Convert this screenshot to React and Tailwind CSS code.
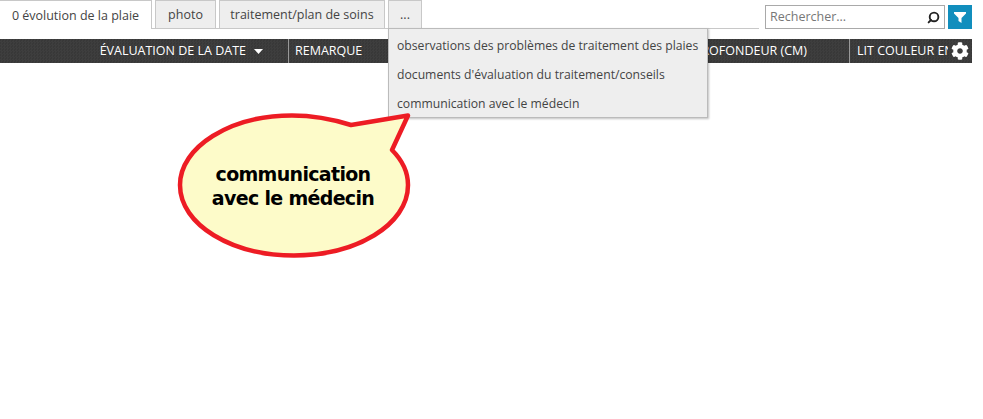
import React from 'react';
import { Search } from 'lucide-react';
import { FaCog } from 'react-icons/fa';

const tabClass = "h-[28px] pt-[2px] flex items-center justify-center bg-[#eeeeee] border border-b-0 border-[#c8c8c8] text-[#444]";

const App = () => {
  return (
    <div className="relative w-[983px] h-[419px] bg-white overflow-hidden font-['Open_Sans',sans-serif] text-[12.5px]">
      {/* top row */}
      <div className="flex h-[39px] w-[972px]">
        <div className="flex flex-1 h-[29px] items-end gap-[3px] border-b border-[#c8c8c8] mr-[6px]">
          <div className="h-[29px] w-[152px] -mb-px pt-[2px] flex items-center justify-center bg-white border-r border-t border-[#c8c8c8] text-[#444]">0 évolution de la plaie</div>
          <div className={tabClass + " w-[61px]"}>photo</div>
          <div className={tabClass + " w-[166px]"}>traitement/plan de soins</div>
          <div className={tabClass + " w-[34px]"}>...</div>
        </div>
        <div className="flex gap-[3px] pt-[5px] h-[29px] box-content">
          <div className="w-[180px] h-[24px] flex items-center justify-between border border-[#a9a9a9] pl-[4px] pr-[4px]">
            <span className="text-[#777]">Rechercher...</span>
            <Search size={13} strokeWidth={3.5} className="text-[#222] -scale-x-100" />
          </div>
          <div className="w-[24px] h-[24px] bg-[#118ebd] flex items-center justify-center">
            <svg width="12" height="11" viewBox="0 0 12 11"><path d="M0 0h12v1.5L7.5 6v5L4.5 9V6L0 1.5z" fill="#fff" /></svg>
          </div>
        </div>
      </div>

      {/* table header */}
      <div className="relative flex h-[24px] w-[972px] items-center bg-[repeating-conic-gradient(#3e3e3e_0_25%,#383838_0_50%)] bg-[length:3px_3px] text-white">
        <div className="w-[289px] h-full flex items-center justify-end gap-[8px] pr-[25px] border-r border-[#999]">
          <span>ÉVALUATION DE LA DATE</span>
          <svg width="9" height="5" viewBox="0 0 9 5"><path d="M0 0h9L4.5 5z" fill="#fff" /></svg>
        </div>
        <div className="w-[270px] h-full flex items-center pl-[6px]">REMARQUE</div>
        <div className="w-[291px] h-full flex items-center justify-end pr-[42px] border-r border-[#999]">PROFONDEUR (CM)</div>
        <div className="flex-1 h-full flex items-center pl-[7px] overflow-hidden whitespace-nowrap pr-[24px]">
          <span className="block overflow-hidden">LIT COULEUR EN PLAIE</span>
        </div>
        <FaCog size={18} className="absolute right-[3px] top-[3px] text-white" />
      </div>

      {/* dropdown menu */}
      <div className="absolute left-[388px] top-[28px] w-[320px] h-[90px] bg-[#eeeeee] border border-[#bbb] shadow-[1px_1px_2px_rgba(0,0,0,0.25)] flex flex-col pt-[8px] pl-[8px] text-[12.2px] leading-[17px] text-[#444] gap-[12px]">
        <div>observations des problèmes de traitement des plaies</div>
        <div>documents d'évaluation du traitement/conseils</div>
        <div>communication avec le médecin</div>
      </div>

      {/* callout */}
      <svg className="absolute left-[170px] top-[105px]" width="250" height="160" viewBox="0 0 250 160">
        <path d="M10 80C10 42 60 10.5 122 10.5C142 10.5 162 14 181 20L238 10.5L222 45C232 55 238 67 238 80C238 120 186 150.5 124 150.5C62 150.5 10 120 10 80Z" fill="#fdfbc9" stroke="#ed1c24" strokeWidth="4.5" strokeLinejoin="round" />
      </svg>
      <div className="absolute left-[170px] top-[162px] w-[246px] text-center font-['DejaVu_Sans',sans-serif] font-bold text-[19px] tracking-[-0.68px] leading-[24px] text-black">
        communication<br />avec le médecin
      </div>
    </div>
  );
};

export default App;
